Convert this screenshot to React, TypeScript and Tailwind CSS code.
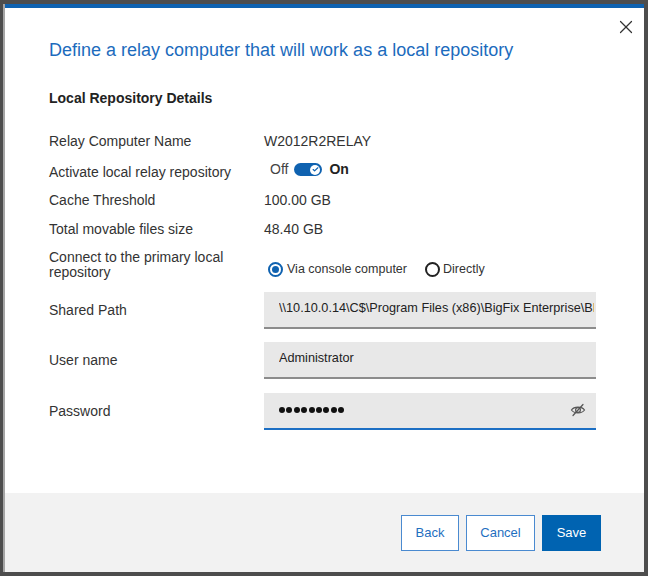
import { X, Check } from 'lucide-react';

const font = { fontFamily: '"Liberation Sans", Arial, sans-serif' };

function Row({ label, h, children }: { label: React.ReactNode; h: string; children?: React.ReactNode }) {
  return (
    <div className={`flex items-center ${h}`}>
      <div className="w-[215px] shrink-0 text-[14px] leading-[15px] text-[#333]">{label}</div>
      <div className="flex-1 flex items-center text-[14px] text-[#333]">{children}</div>
    </div>
  );
}

function EyeSlash() {
  return (
    <svg width="16" height="14" viewBox="0 0 16 14" fill="none" stroke="#555" strokeWidth="1.2" strokeLinecap="round">
      <path d="M1.5 7 C4 3.2 12 3.2 14.5 7 C12 10.8 4 10.8 1.5 7 Z" />
      <circle cx="8" cy="7" r="2.4" />
      <path d="M3 12.5 L13 1.5" />
    </svg>
  );
}

function Field({ value, active, password }: { value?: string; active?: boolean; password?: boolean }) {
  return (
    <div
      className={`w-[332px] h-[37px] bg-[#e8e8e8] flex items-center pl-[15px] pr-[10px] overflow-hidden border-b-2 ${
        active ? 'border-[#1c6fc4]' : 'border-[#8c8c8c]'
      }`}
    >
      {password ? (
        <div className="flex-1 flex items-center gap-[1.4px]">
          {[...Array(9)].map((_, i) => (
            <span key={i} className="w-[6px] h-[6px] rounded-full bg-[#111]" />
          ))}
        </div>
      ) : (
        <span className="flex-1 whitespace-nowrap text-[12.7px] text-[#222] -mr-[8px] overflow-hidden">{value}</span>
      )}
      {password && <EyeSlash />}
    </div>
  );
}

export default function App() {
  return (
    <div className="w-[648px] h-[576px] bg-[#4d4d4d] pt-[4px] pl-[3px] pr-[4px] pb-[4px] flex" style={font}>
      <div className="flex-1 flex flex-col border-l-2 border-[#a5a5a5] bg-white">
        <div className="h-[4px] bg-[#0f62b0]" />
        <div className="flex-1 relative pl-[44px] pr-[46px]">
          <button className="absolute right-[7px] top-[8px] text-[#333]">
            <X className="w-[22px] h-[22px]" strokeWidth={1.3} />
          </button>
          <h1 className="mt-[32px] text-[18px] leading-[21px] text-[#1c6bbd]">
            Define a relay computer that will work as a local repository
          </h1>
          <h2 className="mt-[27px] text-[14px] leading-[20px] font-bold text-[#222]">Local Repository Details</h2>

          <div className="mt-[18px] flex flex-col">
            <Row label="Relay Computer Name" h="h-[30px]">W2012R2RELAY</Row>
            <Row label="Activate local relay repository" h="h-[32px]">
              <div className="flex items-center mb-[5px]">
                <span className="ml-[6px] text-[#444]">Off</span>
                <span className="ml-[6px] w-[28px] h-[13px] rounded-full bg-[#0f62b0] flex items-center justify-end pr-[2px]">
                  <span className="w-[10px] h-[10px] rounded-full bg-white flex items-center justify-center">
                    <Check className="w-[7px] h-[7px] text-[#0f62b0]" strokeWidth={4} />
                  </span>
                </span>
                <span className="ml-[7px] font-bold text-[#222]">On</span>
              </div>
            </Row>
            <Row label="Cache Threshold" h="h-[24px]">100.00 GB</Row>
            <Row label="Total movable files size" h="h-[34px]">48.40 GB</Row>
            <Row
              label={
                <>
                  Connect to the primary local
                  <br />
                  repository
                </>
              }
              h="h-[37px]"
            >
              <div className="flex items-center mt-[9px]">
                <label className="ml-[4px] flex items-center text-[12.5px] text-[#333]">
                  <span className="w-[15px] h-[15px] rounded-full border-2 border-[#0f62b0] flex items-center justify-center">
                    <span className="w-[7px] h-[7px] rounded-full bg-[#0f62b0]" />
                  </span>
                  <span className="ml-[4px]">Via console computer</span>
                </label>
                <label className="ml-[18px] flex items-center text-[12.5px] text-[#333]">
                  <span className="w-[15px] h-[15px] rounded-full border-2 border-[#222]" />
                  <span className="ml-[3px]">Directly</span>
                </label>
              </div>
            </Row>
            <Row label="Shared Path" h="h-[54px]">
              <Field value="\\10.10.0.14\C$\Program Files (x86)\BigFix Enterprise\BES Server" />
            </Row>
            <Row label="User name" h="h-[46px]">
              <Field value="Administrator" />
            </Row>
            <Row label="Password" h="h-[56px]">
              <Field active password />
            </Row>
          </div>
        </div>
        <div className="h-[79px] bg-[#f2f2f2] flex items-center justify-end gap-[7px] pr-[43px]">
          <button className="w-[58px] h-[36px] border border-[#4a8ad0] bg-white text-[13px] text-[#1f6fbf]">Back</button>
          <button className="w-[69px] h-[36px] border border-[#4a8ad0] bg-white text-[13px] text-[#1f6fbf]">Cancel</button>
          <button className="w-[59px] h-[36px] bg-[#0063b1] text-[13px] text-white">Save</button>
        </div>
      </div>
    </div>
  );
}
